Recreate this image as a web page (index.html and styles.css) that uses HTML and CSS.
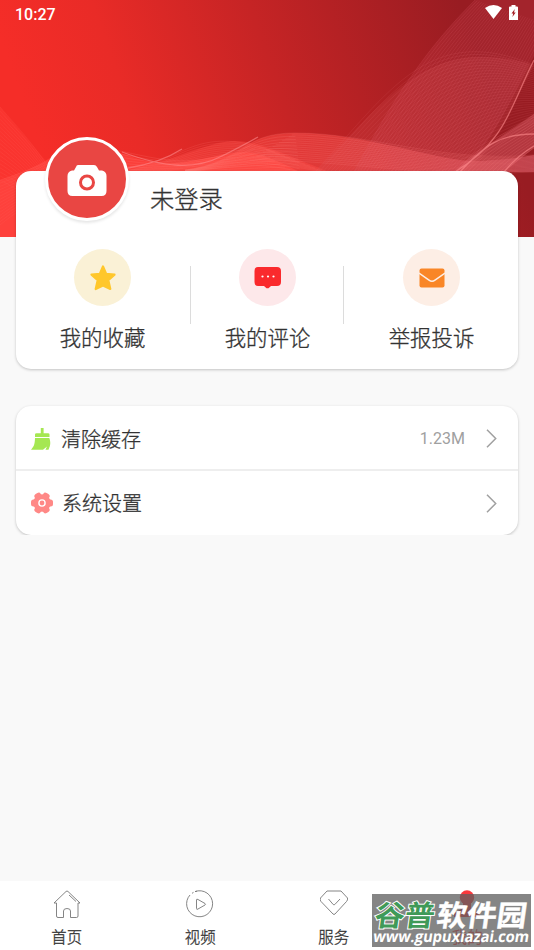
FILE: index.html
```html
<!DOCTYPE html>
<html lang="zh-CN">
<head>
<meta charset="utf-8">
<title>我的</title>
<link rel="stylesheet" href="styles.css">
</head>
<body>
<div class="screen">
  <svg class="banner" viewBox="0 0 534 237" aria-hidden="true">
    <defs>
      <linearGradient id="red" gradientUnits="userSpaceOnUse" x1="40" y1="150" x2="460" y2="0">
        <stop offset="0" stop-color="#f52d28"/><stop offset=".22" stop-color="#e92b27"/><stop offset=".55" stop-color="#c62425"/><stop offset="1" stop-color="#981c22"/>
      </linearGradient>
      <linearGradient id="glow" x1="0" y1="0" x2="1" y2="0">
        <stop offset="0" stop-color="#ff4740"/><stop offset=".55" stop-color="#ff5552"/><stop offset="1" stop-color="#dc6070"/>
      </linearGradient>
    </defs>
    <rect width="534" height="237" fill="url(#red)"/>
    <path d="M0 107 45 160V237H0z" fill="#ff3c35" opacity=".5"/>
    <path d="M0 180Q45 165 60 150C130 140 130 170 185 162S240 141 300 172V237H0z" fill="#ff4540" opacity=".8"/>
    <path d="M125 171C190 156 210 141 235 141S285 155 330 172z" fill="#ff4b46" opacity=".4"/>
    <path d="M185 172C245 162 240 133 295 133C370 133 440 163 480 161S520 157 534 155V172z" fill="url(#glow)" opacity=".48"/>
    <path d="M354 172C398 90 430 45 475 0H534V55C505 110 492 145 460 172z" fill="#d8505c" opacity=".18"/>
    <path d="M315 172C380 105 415 58 480 57Q510 57 534 65C512 105 500 140 468 172z" fill="#dd5660" opacity=".18"/>
    <path d="M455 172C475 150 510 132 534 114V148L504 172z" fill="#df616b" opacity=".4"/>
    <g id="waves" class="waves"></g>
    <g class="streaks">
      <path d="M534 60C510 107 507 140 455 172M534 134C500 134 485 145 460 172M534 146Q517 156 504 172"/>
      <path d="M122 152C165 168 195 170 222 156Q242 146 258 137M128 168Q160 163 182 149"/>
    </g>
  </svg>

  <header class="status">
    <span>10:27</span>
    <span class="status-icons">
      <svg width="17" height="14" viewBox="0 0 17 14"><path d="M0 3Q8.500-3 17 3L8.500 14z" fill="#fff"/></svg>
      <svg width="9" height="15" viewBox="0 0 9 15"><path d="M2.500 1.400V0h4v1.400H8q1 0 1 1V15H0V2.400q0-1 1-1z" fill="#fff"/><path d="M5.800 4 2.500 8.400h1.700L3.400 12 6.700 7.600H5z" fill="#a51e25"/></svg>
    </span>
  </header>

  <main>
    <section class="card profile">
      <div class="identity">
        <div class="avatar">
          <svg width="40" height="32" viewBox="0 0 40 32"><path d="M11 0H27Q29 0 30 2L32 5.500H35Q39.500 6.500 39.500 11V26Q39.500 31 34.500 31H5.500Q.5 31 .5 26V11Q.5 6.500 5 5.500H7L9 2Q9.500 0 11 0Z" fill="#fff"/><circle cx="20" cy="17.500" r="6.500" fill="none" stroke="#e94643" stroke-width="3"/></svg>
        </div>
        <h1>未登录</h1>
      </div>
      <nav class="shortcuts">
        <a class="shortcut">
          <span class="disc disc-yellow"><svg width="28" height="28" viewBox="0 0 28 28"><path d="M14 2.500 17.200 9.900 25.500 10.600 19.300 16.200 21.300 25 14 21.500 6.700 25 8.700 16.200 2.500 10.600 10.800 9.900Z" fill="#ffc72b" stroke="#ffc72b" stroke-width="2.200" stroke-linejoin="round"/></svg></span>
          <span>我的收藏</span>
        </a>
        <a class="shortcut">
          <span class="disc disc-pink"><svg width="28" height="22" viewBox="0 0 28 22"><path d="M4 0H23Q27 0 27 4V15Q27 19 23 19H17L14.500 21.200H12.500L10 19H4Q.5 19 .5 15V4Q.5 0 4 0Z" fill="#fa2a2d"/><g fill="#fff"><circle cx="8.500" cy="9.500" r="1.100"/><circle cx="14" cy="9.500" r="1.100"/><circle cx="19.500" cy="9.500" r="1.100"/></g></svg></span>
          <span>我的评论</span>
        </a>
        <a class="shortcut">
          <span class="disc disc-orange"><svg width="26" height="20" viewBox="0 0 26 20"><rect x=".5" y=".5" width="25" height="19" rx="2" fill="#f98627"/><path d="M0 5 10 12.200Q13 14.300 16 12.200L26 5" fill="none" stroke="#fdeee5" stroke-width="1.500"/></svg></span>
          <span>举报投诉</span>
        </a>
      </nav>
    </section>

    <div class="list-wrap">
      <section class="card list">
        <a class="row">
          <svg class="row-icon" width="22" height="22" viewBox="0 0 22 22"><path d="M9.800 0h2.800v5.200H17q1.500 0 1.500 1.300V9H4V6.500Q4 5.200 5.500 5.200h4.300zM4 10H18.300C20.500 16 18.500 19 17.500 21.700H14.500L16 18.500 12 21.700H0C3 18.500 3.800 16 4 10Z" fill="#a5e752"/></svg>
          <span class="label">清除缓存</span><span class="value">1.23M</span>
          <svg class="chevron" width="11" height="19" viewBox="0 0 11 19"><path d="M1 .8 9.700 9.500 1 18.200"/></svg>
        </a>
        <a class="row">
          <svg class="row-icon" width="22" height="22" viewBox="0 0 22 22"><g fill="#ff8886"><circle cx="11" cy="11" r="8.800"/><rect x="0" y="7.500" width="22" height="7" rx="2.500"/><rect x="0" y="7.500" width="22" height="7" rx="2.500" transform="rotate(60 11 11)"/><rect x="0" y="7.500" width="22" height="7" rx="2.500" transform="rotate(120 11 11)"/></g><circle cx="11" cy="11" r="3.100" fill="none" stroke="#fff" stroke-width="1.400"/></svg>
          <span class="label shift">系统设置</span>
          <svg class="chevron" width="11" height="19" viewBox="0 0 11 19"><path d="M1 .8 9.700 9.500 1 18.200"/></svg>
        </a>
      </section>
    </div>
  </main>

  <nav class="tabs">
    <a class="tab"><svg width="28" height="28" viewBox="0 0 28 28"><path d="M1 13 13 1.500Q14 .5 15 1.500L27 13H25V26Q25 27.500 23.500 27.500H17.500V21Q17.500 18.500 14 18.500T10.500 21V27.500H5Q3.500 27.500 3.500 26V13ZM16 5 23 11.500"/></svg><span>首页</span></a>
    <a class="tab"><svg width="28" height="28" viewBox="0 0 28 28"><path d="M4 5A13 13 0 1 0 9 1.600M6 3.300 7.500 2.400M11 1.200A13 13 0 0 0 9 1.600M10.500 10V18.500Q10.500 20 12 19L19 15Q20 14.200 19 13.500L12 9.500Q10.500 8.500 10.500 10Z"/></svg><span>视频</span></a>
    <a class="tab"><svg width="28" height="28" viewBox="0 0 28 28"><path d="M7 1H21L27.500 8Q28 10 26.500 11.500L15 24Q14 25 13 24L1 11.500Q-.5 10 .5 8ZM8.500 9 13.200 14.500Q14 15.300 14.800 14.500L20 9"/></svg><span>服务</span></a>
    <a class="tab active"><svg width="28" height="28" viewBox="0 0 28 28"><circle cx="14" cy="7.500" r="7.200"/><path d="M10 11H18V18L27 23V27H1V23L10 18Z"/></svg><span>我的</span></a>
  </nav>

  <div class="watermark">
    <svg width="159" height="53" viewBox="0 0 159 53">
      <g class="brand"><text x="2" y="32" textLength="60" lengthAdjust="spacingAndGlyphs" class="green">谷普</text><text x="64" y="32" textLength="90" lengthAdjust="spacingAndGlyphs" class="white">软件园</text></g>
      <text x="8" y="48" textLength="156" lengthAdjust="spacingAndGlyphs" class="site">www.gupuxiazai.com</text>
    </svg>
  </div>
</div>
<script src="waves.js"></script>
</body>
</html>
```
FILE: styles.css
```css
* { box-sizing: border-box; }
body { margin: 0; background: #f9f9f9; font-family: Roboto, "Noto Sans CJK SC", sans-serif; color: #333; }
.screen { position: relative; height: 950px; display: flex; flex-direction: column; overflow: hidden; }
.banner { position: absolute; top: 0; left: 0; width: 534px; height: 237px; }
.waves path { fill: none; stroke-width: .6; }
.streaks { fill: none; stroke: #ff8b8c; stroke-opacity: .6; stroke-width: 1.3; filter: blur(.5px); }
.status { position: relative; height: 171px; padding: 5px 15px 0; display: flex; justify-content: space-between; align-items: flex-start; color: #fff; font-size: 16px; line-height: 19px; font-weight: 500; }
.status-icons { display: flex; gap: 7px; margin-right: 1px; }
main { position: relative; flex: 1; padding: 0 16px; }
.card { background: #fff; border-radius: 15px; box-shadow: 0 1px 3px rgba(0, 0, 0, .22); }
.profile { height: 198px; }
.identity { display: flex; height: 78px; padding-left: 29px; }
.avatar { width: 84px; height: 84px; margin-top: -34px; border: 3px solid #fff; border-radius: 50%; background: #e94643; display: flex; align-items: center; justify-content: center; box-shadow: 0 2px 3px rgba(0, 0, 0, .1); flex: none; }
.avatar svg { margin-top: 3px; }
h1, .shortcut, .label, .tab { font-weight: 300; -webkit-text-stroke: .3px currentColor; }
h1 { margin: 11px 0 0 21px; font-size: 24.3px; line-height: 36px; }
.shortcuts { display: grid; grid-template-columns: 175px 153px 174px; }
.shortcut { position: relative; display: flex; flex-direction: column; align-items: center; gap: 15px; font-size: 21.4px; line-height: 36px; white-space: nowrap; }
.shortcut:first-child { padding-right: 2px; }
.shortcut:last-child { padding-left: 1px; }
.shortcut:not(:last-child)::after { content: ""; position: absolute; right: 0; top: 17px; width: 1px; height: 58px; background: #dcdcdc; }
.disc { width: 57px; height: 57px; border-radius: 50%; display: flex; align-items: center; justify-content: center; }
.disc-yellow { background: #faf1d6; }
.disc-pink { background: #fde8ea; }
.disc-orange { background: #fdeee5; }
.list-wrap { margin: 27px -10px 0; padding: 10px 10px 0; overflow: hidden; }
.list { height: 129px; }
.row { display: flex; align-items: center; height: 65px; padding: 2px 21px 0 15px; font-size: 20px; }
.row:first-child { border-bottom: 2px solid #eee; }
.row:last-child { height: 64px; padding-top: 0; }
.label { margin-left: 8px; }
.shift { margin: -2px 0 0 9px; }
.value { margin-left: auto; color: #a0a0a0; font-size: 16px; }
.chevron { margin-left: auto; fill: none; stroke: #a0a0a0; stroke-width: 1.5; }
.value + .chevron { margin-left: 21px; }
.tabs { position: relative; height: 69px; display: grid; grid-template-columns: repeat(4, 1fr); background: #fff; }
.tab { display: flex; flex-direction: column; align-items: center; padding-top: 9px; font-size: 15.4px; line-height: 26px; gap: 7px; }
.tab svg { fill: none; stroke: #777; stroke-width: .9; }
.active { color: #f33; }
.tab.active svg { fill: #f9383c; stroke: none; }
.watermark { position: absolute; left: 372px; top: 894px; width: 159px; height: 53px; background: rgba(95, 95, 95, .76); }
.watermark svg { display: block; }
.brand { font: 700 29px "Noto Sans CJK SC", sans-serif; transform: translateX(4px) skewX(-8deg); }
.green { fill: #3f9a58; stroke: #fff; stroke-width: 2px; paint-order: stroke; }
.white { fill: #fff; stroke: #fff; stroke-width: .4px; }
.site { font: 700 15.5px "Open Sans", sans-serif; fill: #fff; transform: skewX(-9deg); }
```
FILE: waves.js
```js
// Each family blends from one cubic curve to another: [from, to, lines, colour, opacity].
const families = [
  [[354, 172, 398, 90, 430, 45, 475, 0], [460, 172, 500, 130, 512, 95, 550, 25], 34, "#ee7780", .22],
  [[315, 172, 390, 90, 430, 22, 534, 65], [420, 190, 470, 160, 500, 150, 534, 125], 32, "#ee7780", .2],
  [[185, 170, 245, 162, 240, 133, 295, 133], [185, 172, 230, 168, 255, 160, 300, 172], 12, "#ff8580", .3],
  [[295, 133, 370, 133, 440, 163, 534, 155], [250, 160, 350, 160, 420, 178, 534, 172], 14, "#ff8080", .3],
  [[115, 150, 165, 160, 190, 170, 250, 146], [100, 180, 170, 180, 200, 170, 300, 176], 10, "#ff8580", .3],
  [[125, 171, 185, 160, 195, 125, 270, 150], [140, 175, 190, 170, 230, 150, 330, 174], 12, "#ff7770", .3],
  [[0, 107, 20, 130, 35, 145, 60, 185], [0, 180, 20, 190, 35, 200, 60, 230], 18, "#ff6a62", .25],
  [[0, 180, 30, 170, 40, 165, 70, 152], [0, 225, 30, 200, 45, 200, 70, 180], 14, "#ff6a62", .25],
  [[455, 172, 485, 140, 510, 132, 534, 114], [504, 172, 515, 162, 525, 154, 534, 148], 12, "#ff8a90", .25]
];
const group = document.getElementById("waves");
for (const [from, to, lines, colour, opacity] of families) {
  for (let i = 0; i <= lines; i++) {
    const p = from.map((v, k) => (v + (to[k] - v) * i / lines).toFixed(1));
    const path = document.createElementNS("http://www.w3.org/2000/svg", "path");
    path.setAttribute("d", `M${p[0]} ${p[1]}C${p.slice(2).join(" ")}`);
    path.setAttribute("stroke", colour);
    path.setAttribute("stroke-opacity", opacity);
    group.appendChild(path);
  }
}
```
